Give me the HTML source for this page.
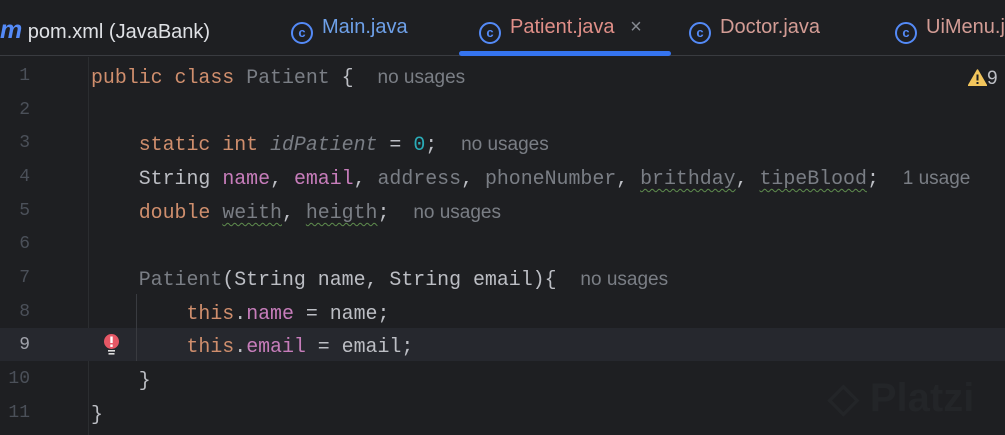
<!DOCTYPE html>
<html><head><meta charset="utf-8"><style>
body{margin:0;width:1005px;height:435px;background:#1e1f22;overflow:hidden;position:relative;font-family:"Liberation Sans",sans-serif}
.tabs{position:absolute;left:0;top:0;width:1005px;height:56px;border-bottom:1px solid #393b40;box-sizing:border-box}
.tab{position:absolute;top:16px;font-size:20px;white-space:nowrap}
.ico{display:inline-block;width:22px;height:22px;border:2px solid #548af7;border-radius:50%;box-sizing:border-box;vertical-align:-4px;margin-right:9px;position:relative;color:#548af7;font-size:13px;text-align:center;line-height:18px;font-weight:bold}
.ul{position:absolute;left:459px;top:51px;width:212px;height:5px;background:#3574f0;border-radius:3px}
.code{position:absolute;left:0;top:61px;font-family:"Liberation Mono",monospace;font-size:19.9px;}
.ln{position:absolute;left:0;width:30px;text-align:right;color:#4b5059;font-size:18px}
.l{position:absolute;left:91px;white-space:pre;color:#bcbec4}
.k{color:#cf8e6d}.f{color:#c77dbb}.n{color:#2aacb8}.g{color:#7a7e85}.it{font-style:italic}
.h{font-family:"Liberation Sans",sans-serif;color:#7a7e85;font-size:19px}
.w{text-decoration:underline wavy #5f8d4e;text-underline-offset:4px;text-decoration-thickness:1px}
</style></head><body>
<div class="tabs">
<div class="tab" style="left:0;color:#dfe1e5"><span style="color:#548af7;font-style:italic;font-size:25px;font-weight:bold">m</span> pom.xml (JavaBank)</div>
<div class="tab" style="left:291px;color:#6ea0e8"><span class="ico">c</span>Main.java</div>
<div class="tab" style="left:479px;color:#e08f88"><span class="ico">c</span>Patient.java <span style="color:#868a91;margin-left:10px">×</span></div>
<div class="tab" style="left:689px;color:#d39c95"><span class="ico">c</span>Doctor.java</div>
<div class="tab" style="left:895px;color:#d39c95"><span class="ico">c</span>UiMenu.java</div>
</div>
<div class="ul"></div>
<div style="position:absolute;left:88px;top:57px;width:1px;height:378px;background:#2b2d30"></div>
<div style="position:absolute;left:0;top:328px;width:1005px;height:33px;background:#26282e"></div>
<div style="position:absolute;left:136px;top:294px;width:1px;height:67px;background:#393b40"></div>
<div style="position:absolute;left:103px;top:333px;width:17px;height:24px"><svg width="17" height="24"><circle cx="8.5" cy="8.5" r="7.5" fill="#e55765"/><rect x="7.3" y="3.5" width="2.4" height="6.5" fill="#fff"/><rect x="7.3" y="11.5" width="2.4" height="2.4" fill="#fff"/><rect x="5" y="17" width="7" height="1.6" fill="#ddd"/><rect x="5.5" y="20" width="6" height="1.6" fill="#ddd"/></svg></div>
<div style="position:absolute;left:968px;top:68px;font-size:19px;color:#bcbec4"><svg width="19" height="17" style="vertical-align:-2px"><path d="M9.5 1 L18.5 16.5 H0.5 Z" fill="#f2c55c" stroke="#f2c55c" stroke-linejoin="round" stroke-width="1.5"/><rect x="8.5" y="5.5" width="2" height="6" fill="#1e1f22"/><rect x="8.5" y="13" width="2" height="2" fill="#1e1f22"/></svg>9</div>
<div style="position:absolute;left:828px;top:375px;font-size:40px;color:#232528;font-weight:bold">◇ Platzi</div>
<div class="code">
<div class="ln" style="top:5px">1</div><div class="l" style="top:5px"><span class="k">public class</span> <span class="g">Patient</span> {  <span class="h">no usages</span></div>
<div class="ln" style="top:39px">2</div>
<div class="ln" style="top:72px">3</div><div class="l" style="top:72px">    <span class="k">static int</span> <span class="g it">idPatient</span> = <span class="n">0</span>;  <span class="h">no usages</span></div>
<div class="ln" style="top:106px">4</div><div class="l" style="top:106px">    String <span class="f">name</span>, <span class="f">email</span>, <span class="g">address</span>, <span class="g">phoneNumber</span>, <span class="g w">brithday</span>, <span class="g w">tipeBlood</span>;  <span class="h">1 usage</span></div>
<div class="ln" style="top:140px">5</div><div class="l" style="top:140px">    <span class="k">double</span> <span class="g w">weith</span>, <span class="g w">heigth</span>;  <span class="h">no usages</span></div>
<div class="ln" style="top:173px">6</div>
<div class="ln" style="top:207px">7</div><div class="l" style="top:207px">    <span class="g">Patient</span>(String name, String email){  <span class="h">no usages</span></div>
<div class="ln" style="top:241px">8</div><div class="l" style="top:241px">        <span class="k">this</span>.<span class="f">name</span> = name;</div>
<div class="ln" style="top:274px;color:#a1a3ab">9</div><div class="l" style="top:274px">        <span class="k">this</span>.<span class="f">email</span> = email;</div>
<div class="ln" style="top:308px">10</div><div class="l" style="top:308px">    }</div>
<div class="ln" style="top:342px">11</div><div class="l" style="top:342px">}</div>
</div>
</body></html>
